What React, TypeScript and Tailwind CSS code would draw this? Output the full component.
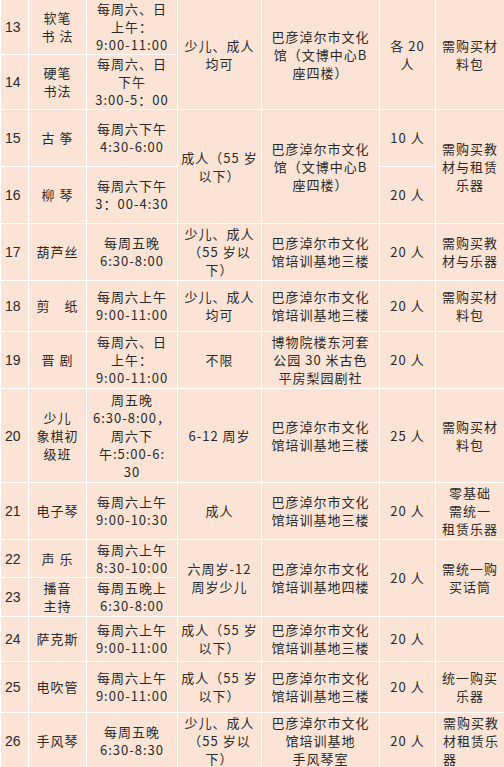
import React from "react";

type Cell = { t: string; rs?: number; left?: boolean; num?: boolean };

const rows: { h: number; cells: Cell[] }[] = [
  {
    h: 55,
    cells: [
      { t: "13", num: true },
      { t: "软笔\n书 法" },
      { t: "每周六、日\n上午：\n9:00-11:00" },
      { t: "少儿、成人\n均可", rs: 2 },
      { t: "巴彦淖尔市文化\n馆（文博中心B\n座四楼）", rs: 2 },
      { t: "各 20\n人", rs: 2 },
      { t: "需购买材\n料包", rs: 2 },
    ],
  },
  {
    h: 55,
    cells: [
      { t: "14", num: true },
      { t: "硬笔\n书法" },
      { t: "每周六、日\n下午\n3:00-5：00" },
    ],
  },
  {
    h: 57,
    cells: [
      { t: "15", num: true },
      { t: "古 筝" },
      { t: "每周六下午\n4:30-6:00" },
      { t: "成人（55 岁\n以下）", rs: 2 },
      { t: "巴彦淖尔市文化\n馆（文博中心B\n座四楼）", rs: 2 },
      { t: "10 人" },
      { t: "需购买教\n材与租赁\n乐器", rs: 2 },
    ],
  },
  {
    h: 57,
    cells: [
      { t: "16", num: true },
      { t: "柳 琴" },
      { t: "每周六下午\n3：00-4:30" },
      { t: "20 人" },
    ],
  },
  {
    h: 57,
    cells: [
      { t: "17", num: true },
      { t: "葫芦丝" },
      { t: "每周五晚\n6:30-8:00" },
      { t: "少儿、成人\n（55 岁以\n下）" },
      { t: "巴彦淖尔市文化\n馆培训基地三楼" },
      { t: "20 人" },
      { t: "需购买教\n材与乐器" },
    ],
  },
  {
    h: 51,
    cells: [
      { t: "18", num: true },
      { t: "剪　纸" },
      { t: "每周六上午\n9:00-11:00" },
      { t: "少儿、成人\n均可" },
      { t: "巴彦淖尔市文化\n馆培训基地三楼" },
      { t: "20 人" },
      { t: "需购买材\n料包" },
    ],
  },
  {
    h: 57,
    cells: [
      { t: "19", num: true },
      { t: "晋 剧" },
      { t: "每周六、日\n上午：\n9:00-11:00" },
      { t: "不限" },
      { t: "博物院楼东河套\n公园 30 米古色\n平房梨园剧社" },
      { t: "20 人" },
      { t: "" },
    ],
  },
  {
    h: 94,
    cells: [
      { t: "20", num: true },
      { t: "少儿\n象棋初\n级班" },
      { t: "周五晚\n6:30-8:00，\n周六下\n午:5:00-6:\n30" },
      { t: "6-12 周岁" },
      { t: "巴彦淖尔市文化\n馆培训基地三楼" },
      { t: "25 人" },
      { t: "需购买材\n料包" },
    ],
  },
  {
    h: 57,
    cells: [
      { t: "21", num: true },
      { t: "电子琴" },
      { t: "每周六上午\n9:00-10:30" },
      { t: "成人" },
      { t: "巴彦淖尔市文化\n馆培训基地三楼" },
      { t: "20 人" },
      { t: "零基础\n需统一\n租赁乐器" },
    ],
  },
  {
    h: 38,
    cells: [
      { t: "22", num: true },
      { t: "声 乐" },
      { t: "每周六上午\n8:30-10:00" },
      { t: "六周岁-12\n周岁少儿", rs: 2 },
      { t: "巴彦淖尔市文化\n馆培训基地四楼", rs: 2 },
      { t: "20 人", rs: 2 },
      { t: "需统一购\n买话筒", rs: 2 },
    ],
  },
  {
    h: 39,
    cells: [
      { t: "23", num: true },
      { t: "播音\n主持" },
      { t: "每周五晚上\n6:30-8:00" },
    ],
  },
  {
    h: 45,
    cells: [
      { t: "24", num: true },
      { t: "萨克斯" },
      { t: "每周六上午\n9:00-11:00" },
      { t: "成人（55 岁\n以下）" },
      { t: "巴彦淖尔市文化\n馆培训基地三楼" },
      { t: "20 人" },
      { t: "" },
    ],
  },
  {
    h: 51,
    cells: [
      { t: "25", num: true },
      { t: "电吹管" },
      { t: "每周六上午\n9:00-11:00" },
      { t: "成人（55 岁\n以下）" },
      { t: "巴彦淖尔市文化\n馆培训基地三楼" },
      { t: "20 人" },
      { t: "统一购买\n乐器" },
    ],
  },
  {
    h: 57,
    cells: [
      { t: "26", num: true },
      { t: "手风琴" },
      { t: "每周五晚\n6:30-8:30" },
      { t: "少儿、成人\n（55 岁以\n下）" },
      { t: "巴彦淖尔市文化\n馆培训基地\n手风琴室" },
      { t: "20 人" },
      { t: "需购买教\n材租赁乐\n器", left: true },
    ],
  },
];

export default function App() {
  return (
    <div className="w-[504px] h-[767px] overflow-hidden bg-[#fbe4d5]">
      <table
        className="-mt-px w-[504px] table-fixed border-collapse text-[13px] leading-[18px] tracking-[1px] text-[#2a2a2a]"
        style={{ fontFamily: '"Noto Sans CJK SC", "Noto Sans", sans-serif' }}
      >
        <colgroup>
          <col className="w-[28px]" />
          <col className="w-[58px]" />
          <col className="w-[91px]" />
          <col className="w-[84px]" />
          <col className="w-[118px]" />
          <col className="w-[56px]" />
          <col className="w-[69px]" />
        </colgroup>
        <tbody>
          {rows.map((r, i) => (
            <tr key={i} style={{ height: r.h }}>
              {r.cells.map((c, j) =>
                c.num ? (
                  <td
                    key={j}
                    rowSpan={c.rs}
                    className="border border-white bg-[#fbe4d5] p-0 pl-[4px] text-left align-middle text-[14px] tracking-normal whitespace-pre-line"
                    style={{ fontFamily: '"Liberation Sans", Arial, sans-serif' }}
                  >
                    {c.t}
                  </td>
                ) : c.left ? (
                  <td
                    key={j}
                    rowSpan={c.rs}
                    className="border border-white bg-[#fbe4d5] p-0 pl-[7px] text-left align-middle whitespace-pre-line"
                  >
                    {c.t}
                  </td>
                ) : (
                  <td
                    key={j}
                    rowSpan={c.rs}
                    className="border border-white bg-[#fbe4d5] p-0 text-center align-middle whitespace-pre-line"
                  >
                    {c.t}
                  </td>
                )
              )}
            </tr>
          ))}
        </tbody>
      </table>
    </div>
  );
}
